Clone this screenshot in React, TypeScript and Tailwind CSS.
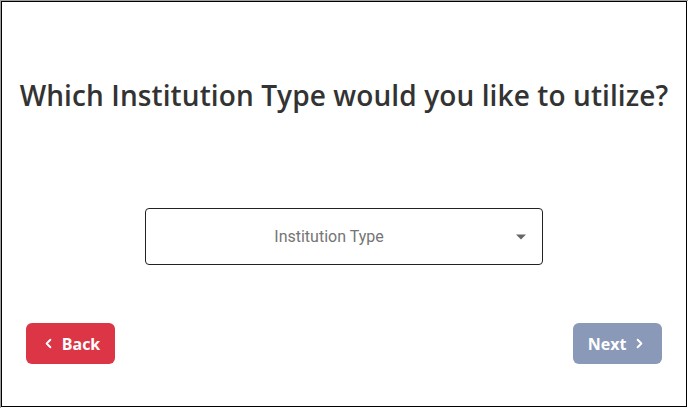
import { ChevronLeft, ChevronRight } from "lucide-react";

export default function App() {
  return (
    <div className="w-[688px] h-[408px] bg-white flex border-t border-l border-[#a0a0a0]">
      <div className="flex-1 flex flex-col border border-black mr-px mb-px px-4 pt-[73px]">
        {/* Question */}
        <h1
          className="text-center text-[28px] leading-[40px] font-semibold text-[#333333] tracking-[0.1px] whitespace-nowrap"
          style={{ fontFamily: '"Open Sans", "Noto Sans", sans-serif' }}
        >
          Which Institution Type would you like to utilize?
        </h1>

        {/* Select */}
        <div className="flex justify-center mt-[93px]">
          <button
            className="relative w-[398px] h-[57px] rounded-[4px] border-[1.5px] border-[#222222] bg-white flex items-center justify-center pr-[30px]"
            style={{ fontFamily: "Roboto, sans-serif" }}
          >
            <span className="text-[16px] text-[#757575]">Institution Type</span>
            <span className="absolute right-[16px] top-1/2 -translate-y-1/2 w-0 h-0 border-l-[5px] border-r-[5px] border-t-[5px] border-l-transparent border-r-transparent border-t-[#666666]" />
          </button>
        </div>

        {/* Navigation */}
        <div
          className="flex justify-between mt-[58px] px-2"
          style={{ fontFamily: '"Open Sans", "Noto Sans", sans-serif' }}
        >
          <button className="w-[89px] h-[41px] rounded-[6px] bg-[#dc3545] text-white font-bold text-[16px] flex items-center justify-center gap-1.5">
            <ChevronLeft size={15} strokeWidth={3} />
            Back
          </button>
          <button className="w-[89px] h-[41px] rounded-[6px] bg-[#8a99b8] text-white font-bold text-[16px] flex items-center justify-center gap-1.5">
            Next
            <ChevronRight size={15} strokeWidth={3} />
          </button>
        </div>
      </div>
    </div>
  );
}
